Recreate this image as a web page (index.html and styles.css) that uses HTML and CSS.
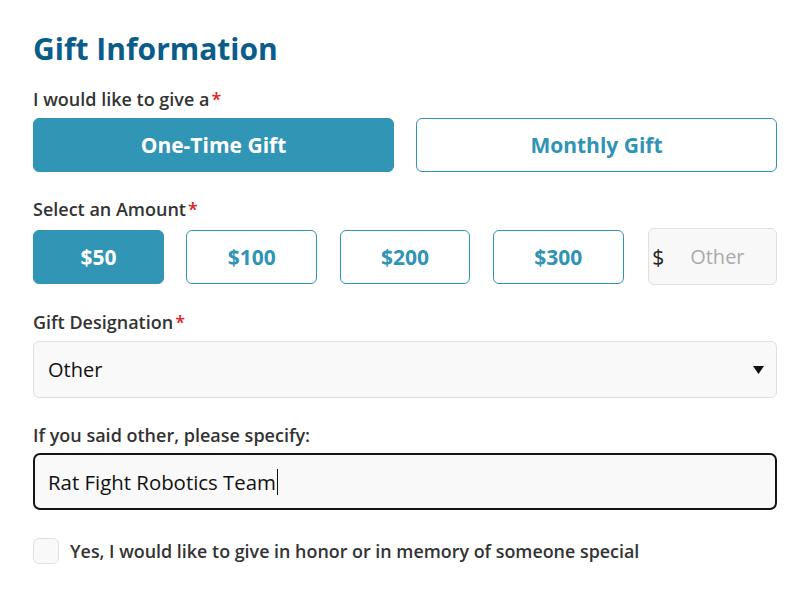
FILE: index.html
```html
<!DOCTYPE html>
<html>
<head>
<meta charset="utf-8">
<link rel="stylesheet" href="styles.css">
</head>
<body>
<main class="form">
  <h1 class="title">Gift Information</h1>

  <div class="field">
    <div class="label">I would like to give a<span class="req">*</span></div>
    <div class="freq">
      <button class="btn btn-on">One-Time Gift</button>
      <button class="btn">Monthly Gift</button>
    </div>
  </div>

  <div class="field">
    <div class="label">Select an Amount<span class="req">*</span></div>
    <div class="amounts">
      <button class="btn btn-on">$50</button>
      <button class="btn">$100</button>
      <button class="btn">$200</button>
      <button class="btn">$300</button>
      <div class="other"><span class="dollar">$</span><span class="ph">Other</span></div>
    </div>
  </div>

  <div class="field">
    <div class="label">Gift Designation<span class="req">*</span></div>
    <div class="select">
      <span>Other</span>
      <svg class="arrow" width="11" height="8" viewBox="0 0 11 8"><path d="M0 0 H11 L5.5 8 Z" fill="#111"/></svg>
    </div>
  </div>

  <div class="field field-last">
    <div class="label label-tight">If you said other, please specify:</div>
    <div class="textbox"><span>Rat Fight Robotics Team</span><span class="caret"></span></div>
  </div>

  <label class="check">
    <span class="box"></span>
    <span class="check-text">Yes, I would like to give in honor or in memory of someone special</span>
  </label>
</main>
</body>
</html>
```

FILE: styles.css
```css
* { box-sizing: border-box; }
html, body { margin: 0; background: #fff; }
body {
  font-family: "Open Sans", "Noto Sans", sans-serif;
  color: #333;
}
.form {
  width: 808px;
  padding: 28px 31px 0 33px;
}
.title {
  margin: 0 0 17px;
  font-size: 30px;
  font-weight: 700;
  line-height: 42px;
  color: #0a5d8a;
}
.field { margin-bottom: 25px; }
.field-last { margin-bottom: 0; }
.label {
  font-size: 18px;
  font-weight: 600;
  line-height: 24px;
  color: #333;
  margin-bottom: 7px;
}
.label-tight { margin-bottom: 6px; }
.req { color: #e02020; margin-left: 2px; }
.freq {
  display: grid;
  grid-template-columns: 1fr 1fr;
  gap: 22px;
}
.btn {
  height: 54px;
  border: 1px solid #3094b5;
  border-radius: 6px;
  background: #fff;
  color: #3094b5;
  font-family: "Open Sans", sans-serif;
  font-size: 21px;
  font-weight: 700;
  padding: 0;
}
.btn-on { background: #3195b5; color: #fff; }
.amounts {
  display: grid;
  grid-template-columns: repeat(5, 1fr);
  gap: 22.5px;
  align-items: center;
}
.other {
  height: 57px;
  border: 1px solid #e0e0e0;
  border-radius: 6px;
  background: #f8f8f8;
  display: flex;
  align-items: center;
  padding-left: 3px;
  font-size: 20px;
  margin-left: 2px;
}
.dollar { color: #222; width: 38px; font-size: 21px; }
.ph { color: #aaa; }
.select {
  height: 57px;
  border: 1px solid #e0e0e0;
  border-radius: 6px;
  background: #f9f9f9;
  display: flex;
  align-items: center;
  justify-content: space-between;
  padding: 0 12px 0 14px;
  font-size: 20px;
  color: #111;
}
.textbox {
  height: 57px;
  border: 2px solid #151515;
  border-radius: 7px;
  background: #f9f9f9;
  display: flex;
  align-items: center;
  padding: 0 13px;
  font-size: 20.4px;
  color: #111;
}
.caret {
  display: inline-block;
  width: 1px;
  height: 26px;
  background: #111;
  margin-left: 1px;
}
.check {
  display: flex;
  align-items: center;
  gap: 11px;
  margin-top: 28px;
}
.box {
  width: 26px;
  height: 26px;
  border: 1px solid #e0e0e0;
  border-radius: 6px;
  background: #f9f9f9;
}
.check-text {
  font-size: 17.9px;
  font-weight: 600;
  color: #333;
}
```
